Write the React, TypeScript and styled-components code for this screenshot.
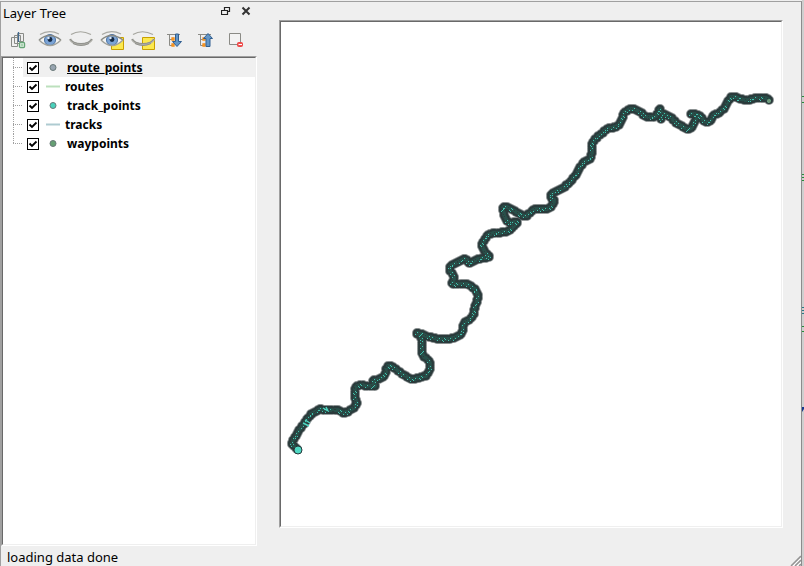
import React from "react";
import styled, { createGlobalStyle } from "styled-components";

const Global = createGlobalStyle`
  * { box-sizing: border-box; }
  body { margin: 0; background: #efefef; color: #000; font-family: "Noto Sans", sans-serif; font-size: 12px; }
`;

const Screen = styled.div`
  display: flex;
  height: 100vh;
  overflow: hidden;
`;
const Window = styled.main`
  flex: 1;
  min-width: 0;
  display: flex;
  flex-direction: column;
  margin-top: 1px;
  border: 1px solid #a0a0a0;
  border-right-color: #8c8c8c;
  border-bottom: 0;
  background: #efefef;
`;
const Backdrop = styled.svg`
  flex: none;
  width: 2px;
  height: 100%;
  background: #cfcfcf;
`;
const Body = styled.div`
  flex: 1;
  min-height: 0;
  display: flex;
  gap: 22px;
`;
const Dock = styled.aside`
  flex: none;
  width: 256px;
  display: flex;
  flex-direction: column;
`;
const TitleBar = styled.header`
  display: flex;
  align-items: center;
  height: 22px;
  padding: 0 1px 0 2px;
`;
const Title = styled.h1`
  flex: 1;
  margin: 0;
  font-size: 13px;
  line-height: 18px;
  font-weight: 400;
`;
const IconButton = styled.button<{ $w: number; $h: number }>`
  display: grid;
  place-items: center;
  width: ${(p) => p.$w}px;
  height: ${(p) => p.$h}px;
  padding: 0;
  border: 0;
  background: none;
  svg { display: block; }
`;
const TitleButton = styled(IconButton)`
  padding-bottom: 4px;
`;
const Toolbar = styled.div`
  display: flex;
  align-items: center;
  height: 32px;
`;
const Sunken = styled.div`
  border: 1px solid;
  border-color: #a0a0a0 #fff #fff #a0a0a0;
  background: #fff;
`;
const TreeFrame = styled(Sunken)`
  flex: 1;
  min-height: 0;
`;
const Tree = styled.ul`
  height: 100%;
  margin: 0;
  padding: 0;
  list-style: none;
  border: 1px solid;
  border-color: #696969 #efefef #efefef #696969;
`;
const Row = styled.li<{ $selected: boolean }>`
  display: flex;
  height: 19px;
  background: ${(p) => (p.$selected ? "linear-gradient(90deg, #fff 20px, #f0f0f0 20px)" : "#fff")};
`;
const Branch = styled.span<{ $last: boolean }>`
  flex: none;
  width: 14px;
  margin-left: 10px;
  height: ${(p) => (p.$last ? 10 : 19)}px;
  background:
    repeating-linear-gradient(180deg, #a0a0a0 0 1px, transparent 1px 2px) 0 0 / 1px 100% no-repeat,
    repeating-linear-gradient(90deg, #a0a0a0 0 1px, transparent 1px 2px) 0 9px / 10px 1px no-repeat;
`;
const RowLabel = styled.label<{ $selected: boolean }>`
  display: flex;
  align-items: center;
  font-weight: 700;
  line-height: 19px;
  text-decoration: ${(p) => (p.$selected ? "underline" : "none")};
`;
const Check = styled.input`
  appearance: none;
  width: 12px;
  height: 12px;
  margin: 0 6px 0 0;
  border: 1px solid #000;
  background: #fff;
  &:checked {
    background-image: url("data:image/svg+xml,%3Csvg xmlns='http://www.w3.org/2000/svg' viewBox='0 0 10 10'%3E%3Cpath d='M1.5 4.5L4 7L8.5 2.5' fill='none' stroke='black' stroke-width='1.8'/%3E%3C/svg%3E");
  }
`;
const Symbol = styled.svg<{ $line: boolean }>`
  width: 16px;
  height: 16px;
  margin-right: ${(p) => (p.$line ? 4 : 6)}px;
`;
const MapArea = styled.section`
  flex: 1;
  min-width: 0;
  display: flex;
  padding: 18px 18px 18px 0;
`;
const MapFrame = styled(Sunken)`
  flex: 1;
  min-width: 0;
  display: flex;
`;
const MapCanvas = styled.svg`
  flex: 1;
  min-width: 0;
  width: 100%;
  height: 100%;
  border: 1px solid;
  border-color: #696969 #efefef #efefef #696969;
`;
const Status = styled.footer`
  display: flex;
  justify-content: space-between;
  height: 20px;
  padding-left: 6px;
  font-size: 13px;
  line-height: 22px;
`;
const Grip = styled.svg`
  align-self: flex-end;
  width: 11px;
  height: 11px;
`;

function EyeOpen() {
  return (
    <g>
      <path d="M1 10Q12 0 23 10Q12 21 1 10Z" fill="#f4f4f2" />
      <circle cx="12" cy="10" r="5.5" fill="#7ba4d6" stroke="#4a72a4" />
      <circle cx="12" cy="9.5" r="2.4" fill="#172b45" />
      <circle cx="10.5" cy="8" r="1.2" fill="#dce9f7" />
      <path d="M2 4.5Q11-1 21 4" fill="none" stroke="#a9a9a3" strokeWidth="1.2" />
      <path d="M1 10Q11 1 23 10" fill="none" stroke="#888983" strokeWidth="1.4" />
      <path d="M1 10Q12 21 23 10" fill="none" stroke="#a0a19a" strokeWidth="1.4" />
    </g>
  );
}
function EyeClosed() {
  return (
    <g fill="none">
      <path d="M2 4.5Q11-1 22 4.5" stroke="#a6a69f" strokeWidth="1.2" />
      <path d="M1 9Q4 14.5 12 14.5Q20 14.5 23 9" stroke="#b0b0aa" strokeWidth="2.6" />
      <path d="M1 9Q4 13.5 12 13.5Q20 13.5 23 9M4 13.5Q12 17.5 20 13.5" stroke="#858681" strokeWidth=".8" />
    </g>
  );
}
const Note = () => <path d="M11.5 7.5H23.5V19.5H11.5Z" fill="#fce94f" stroke="#c9a000" />;

function EyeIcon({ open, note }: { open?: boolean; note?: boolean }) {
  return (
    <svg width="24" height="20" viewBox="0 0 24 20">
      {note && <Note />}
      {open ? <EyeOpen /> : <EyeClosed />}
    </svg>
  );
}

function TreeArrow({ up }: { up: boolean }) {
  return (
    <svg width="16" height="16" viewBox="0 0 16 16">
      <path d="M1 2.5H14M3.5 2.5V13.5H6M3.5 7.5H6" fill="none" stroke="#8b8b86" />
      <path d="M6 6H8V8H6ZM6 12H8V14H6Z" fill="#fff1c8" stroke="#f68b13" strokeWidth="1.3" />
      <path
        d={up ? "M11 1.5L15.5 6.5H13V14.5H9V6.5H6.5Z" : "M9.5 2H12.5V9.5H15.5L11 14.5L6.5 9.5H9.5Z"}
        fill="#6396c7"
        stroke="#315f91"
      />
    </svg>
  );
}

const tools = [
  {
    name: "Add group", w: 33,
    icon: (
      <svg width="16" height="18" viewBox="0 0 16 18">
        <path d="M1.5 6.5H7.5V15.5H1.5ZM4.5 4.5H10.5V12.5H4.5ZM7.5 2.5H13.5V10.5H7.5Z" fill="none" stroke="#898b87" />
        <path d="M8.5 1V11" stroke="#426a91" strokeWidth="1.3" />
        <rect x="9.5" y="11.5" width="5" height="5" rx="1" fill="#fff" stroke="#66a576" strokeWidth="1.4" />
        <path d="M12 12.5V15.5M10.5 14H13.5" stroke="#8bc496" />
      </svg>
    ),
  },
  { name: "Show all layers", w: 31, icon: <EyeIcon open /> },
  { name: "Hide all layers", w: 31, icon: <EyeIcon /> },
  { name: "Show selected layers", w: 31, icon: <EyeIcon open note /> },
  { name: "Hide selected layers", w: 31, icon: <EyeIcon note /> },
  { name: "Expand all", w: 31, icon: <TreeArrow up={false} /> },
  { name: "Collapse all", w: 31, icon: <TreeArrow up /> },
  {
    name: "Remove layer", w: 31,
    icon: (
      <svg width="16" height="16" viewBox="0 0 16 16">
        <path d="M1.5 1.5H12.5V12.5H1.5Z" fill="#f3f3f3" stroke="#8b8b86" />
        <rect x="9.5" y="10.5" width="5" height="4" rx="1" fill="#ed5353" stroke="#e44" />
        <path d="M10.5 12.5H14" stroke="#fff" />
      </svg>
    ),
  },
];

const layers = [
  { name: "route_points", color: "#97a4b0", line: false },
  { name: "routes", color: "#bce0bd", line: true },
  { name: "track_points", color: "#48d1bb", line: false },
  { name: "tracks", color: "#aecbd1", line: true },
  { name: "waypoints", color: "#65a073", line: false },
];

type Point = [number, number];

const track: Point[] = (
  "769 100,766 98,757 98,748 100,742 99,733 97,729 100,725 107,719 113,714 115,710 121,704 121,700 116,691 114,697 115,695 121,691 128,685 128,678 124,670 117,663 114,661 119,660 109,656 116,647 117,640 112,632 109,625 112,621 121,616 127,609 128,601 134,593 142,592 151,590 159,584 162,578 171,572 180,563 188,551 195,554 202,547 209,535 209,525 216,513 210,504 207,505 217,510 223,517 222,508 231,490 234,485 239,482 246,485 252,489 257,478 259,469 263,465 259,450 267,454 277,453 284,467 284,473 288,478 295,475 308,472 317,464 324,461 334,448 339,433 338,417 333,422 340,422 353,430 363,428 373,422 377,409 378,390 366,383 377,373 381,375 386,357 386,355 396,356 405,345 413,338 410,323 410,320 409,313 413,308 418,293 440,293 445,298 450"
)
  .split(",")
  .map((p) => p.split(" ").map(Number) as Point);

const spline = (a: number, b: number, c: number, d: number, t: number) =>
  0.5 * (2 * b + (c - a) * t + (2 * a - 5 * b + 4 * c - d) * t * t + (3 * b - a - 3 * c + d) * t * t * t);

/* GPS fixes: the track resampled and snapped to whole map pixels. */
const fixes: Point[] = track.slice(0, -1).flatMap((p, i) => {
  const q = track[i + 1];
  const before = track[Math.max(0, i - 1)];
  const after = track[Math.min(track.length - 1, i + 2)];
  const steps = Math.max(1, Math.round(Math.hypot(q[0] - p[0], q[1] - p[1]) / 2));
  return Array.from({ length: steps }, (_, k) => {
    const t = k / steps;
    return [
      Math.round(spline(before[0], p[0], q[0], after[0], t)),
      Math.round(spline(before[1], p[1], q[1], after[1], t)),
    ] as Point;
  });
});

const beads = (r: number) => fixes.map(([x, y]) => `M${x - r} ${y}a${r} ${r} 0 1 0 ${2 * r} 0a${r} ${r} 0 1 0 ${-2 * r} 0`).join("");
const speckle = (every: number, dx: number, dy: number) =>
  fixes
    .filter((_, i) => (i * 7) % every < 3)
    .map(([x, y]) => `M${x + dx} ${y + dy}h1v1h-1zM${x + dx - 2} ${y + dy + 2}h1v1h-1z`)
    .join("");

function Track() {
  return (
    <g>
      <path d={beads(5)} fill="#2b3738" fillOpacity=".55" />
      <path d={beads(4)} fill="#2a3a3b" />
      <path d={beads(2)} fill="#28504a" />
      <path d={speckle(5, -1, -1)} fill="#2c3b3b" />
      <g shapeRendering="crispEdges" fill="#43c2ae">
        <path d={speckle(11, 0, -1)} />
        <path d={speckle(17, 1, 0)} />
      </g>
      <path d="M303 423L309 426M305 420L310 423M323 408L328 411M326 407L328 411" stroke="#4fd8c3" strokeWidth="1.4" />
      <circle cx="769" cy="101" r="2" fill="#719b7c" />
      <circle cx="298" cy="450" r="4" fill="#4fd8c3" stroke="#26383a" />
    </g>
  );
}

export default function App() {
  return (
    <>
      <Global />
      <Screen>
        <Window>
          <Body>
            <Dock>
              <TitleBar>
                <Title>Layer Tree</Title>
                <TitleButton $w={20} $h={20} aria-label="Float panel">
                  <svg width="10" height="10" viewBox="0 0 10 10">
                    <path d="M3.5 4V1.5H8.5V5.5H6M3 1.5H9M.5 4.5H6.5V8.5H.5ZM0 4.5H7" fill="none" stroke="#222" strokeWidth="1.2" />
                  </svg>
                </TitleButton>
                <TitleButton $w={20} $h={20} aria-label="Close panel">
                  <svg width="10" height="10" viewBox="0 0 10 10">
                    <path d="M1.5 1.5L8.5 8.5M8.5 1.5L1.5 8.5" stroke="#333" strokeWidth="2" />
                  </svg>
                </TitleButton>
              </TitleBar>
              <Toolbar role="toolbar" aria-label="Layer tools">
                {tools.map((t) => (
                  <IconButton key={t.name} $w={t.w} $h={28} aria-label={t.name}>{t.icon}</IconButton>
                ))}
              </Toolbar>
              <TreeFrame>
                <Tree>
                  {layers.map((l, i) => (
                    <Row key={l.name} $selected={i === 0}>
                      <Branch $last={i === layers.length - 1} />
                      <RowLabel $selected={i === 0}>
                        <Check type="checkbox" defaultChecked />
                        <Symbol $line={l.line} viewBox="0 0 16 16">
                          {l.line ? (
                            <path d="M1 7.5H15" stroke={l.color} strokeWidth="2" />
                          ) : (
                            <circle cx="8" cy="7.5" r="3" fill={l.color} stroke="#687878" />
                          )}
                        </Symbol>
                        {l.name}
                      </RowLabel>
                    </Row>
                  ))}
                </Tree>
              </TreeFrame>
            </Dock>
            <MapArea>
              <MapFrame>
                <MapCanvas viewBox="281 22 500 504" role="img" aria-label="Track map">
                  <Track />
                </MapCanvas>
              </MapFrame>
            </MapArea>
          </Body>
          <Status>
            <span role="status">loading data done</span>
            <Grip viewBox="0 0 11 11" aria-hidden="true">
              <path d="M0 11L11 0V11Z" fill="#fff" />
              <path d="M1 11L11 1M5 11L11 5M9 11L11 9" stroke="#949494" strokeWidth="1.6" />
            </Grip>
          </Status>
        </Window>
        <Backdrop aria-hidden="true">
          <path d="M0 96.5H2M0 102.5H2M0 174.5H2M0 177.5H2M0 180.5H2M0 326.5H2M0 331.5H2" stroke="#258c39" />
          <path d="M0 307.5H2M0 310.5H2M0 313.5H2" stroke="#297986" />
          <path d="M0 407H2V409L0 412Z" fill="#17378c" />
        </Backdrop>
      </Screen>
    </>
  );
}
